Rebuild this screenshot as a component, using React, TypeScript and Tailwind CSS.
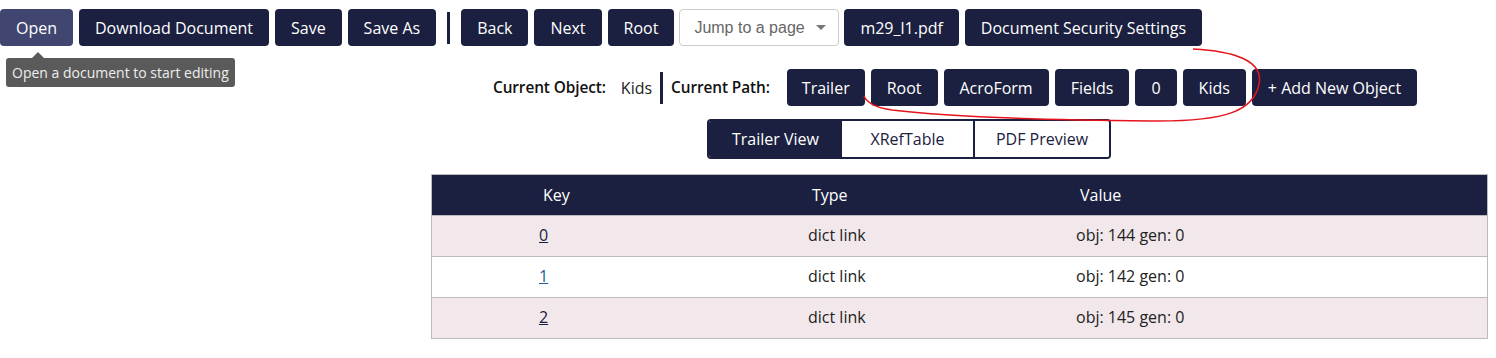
import React from "react";

const navyBtn =
  "h-[37px] px-4 flex items-center rounded-[4px] bg-[#1b2040] text-white text-[16px] whitespace-nowrap";

function Btn({ label, className = "" }: { label: string; className?: string }) {
  return <button className={`${navyBtn} ${className}`}>{label}</button>;
}

const rows = [
  { key: "0", value: "obj: 144 gen: 0", bg: "bg-[#f2e8eb]", link: "text-[#1b2040]" },
  { key: "1", value: "obj: 142 gen: 0", bg: "bg-white", link: "text-[#1a5f9e]" },
  { key: "2", value: "obj: 145 gen: 0", bg: "bg-[#f2e8eb]", link: "text-[#1b2040]" },
];

export default function App() {
  return (
    <div className="relative w-[1496px] h-[358px] bg-white font-['Open_Sans',sans-serif] text-[#222]">
      {/* toolbar */}
      <div className="flex items-center gap-[6px] pt-[9px]">
        <div className="relative">
          <button className="h-[37px] w-[73px] flex items-center justify-center rounded-[4px] bg-[#40466f] text-white text-[16px]">
            Open
          </button>
          <div className="absolute left-[6px] top-[49px] z-10">
            <div className="absolute left-[26px] -top-[6px] w-0 h-0 border-l-[6px] border-r-[6px] border-b-[6px] border-l-transparent border-r-transparent border-b-[#5a5a5a]" />
            <div className="w-[229px] h-[29px] flex items-center px-[6px] rounded-[3px] bg-[#5a5a5a] text-[#eee] text-[14px] whitespace-nowrap">
              Open a document to start editing
            </div>
          </div>
        </div>
        <Btn label="Download Document" />
        <Btn label="Save" />
        <Btn label="Save As" />
        <div className="w-[3px] h-[32px] bg-[#1b2040] mx-[5px]" />
        <Btn label="Back" />
        <Btn label="Next" />
        <Btn label="Root" />
        <div className="-ml-px h-[37px] w-[160px] flex items-center justify-between pl-[14px] pr-[12px] rounded-[4px] border border-[#ccc] bg-white text-[#666] text-[16px] font-['Liberation_Sans',sans-serif]">
          <span>Jump to a page</span>
          <svg width="10" height="6" viewBox="0 0 10 6">
            <path d="M0 0h10L5 5z" fill="#777" />
          </svg>
        </div>
        <Btn label="m29_l1.pdf" className="-ml-px" />
        <Btn label="Document Security Settings" />
      </div>

      <div className="flex">
        <div className="w-[431px] shrink-0" />
        <div className="w-[1057px]">
          {/* path row */}
          <div className="flex items-center pl-[62px] mt-[23px] text-[16px]">
            <span className="font-semibold text-[#111] text-[15.4px] tracking-[-0.1px]">Current Object:</span>
            <span className="ml-[15px]">Kids</span>
            <div className="w-[3px] h-[32px] bg-[#1b2040] ml-[8px] mr-[8px]" />
            <span className="font-semibold text-[#111] text-[15.4px] tracking-[-0.1px]">Current Path:</span>
            <div className="flex items-center gap-[6px] ml-[17px]">
              <Btn label="Trailer" className="px-[15px]" />
              <Btn label="Root" />
              <Btn label="AcroForm" />
              <Btn label="Fields" />
              <Btn label="0" />
              <Btn label="Kids" />
              <Btn label="+ Add New Object" />
            </div>
          </div>

          {/* tabs */}
          <div className="flex pl-[276px] mt-[13px]">
            <div className="flex h-[40px] rounded-[4px] border-2 border-[#1b2040] overflow-hidden text-[16px]">
              <div className="w-[133px] flex items-center justify-center bg-[#1b2040] text-white">Trailer View</div>
              <div className="w-[133px] flex items-center justify-center bg-white text-[#1b2040] border-r-2 border-[#1b2040]">
                XRefTable
              </div>
              <div className="w-[134px] flex items-center justify-center bg-white text-[#1b2040]">PDF Preview</div>
            </div>
          </div>

          {/* table */}
          <div className="mt-[15px] border border-[#bbb] text-[16px]">
            <div className="grid grid-cols-[269px_268px_1fr] h-[40px] items-center bg-[#1b2040] text-white pl-[111px]">
              <div>Key</div>
              <div>Type</div>
              <div>Value</div>
            </div>
            {rows.map((r) => (
              <div
                key={r.key}
                className={`grid grid-cols-[269px_268px_1fr] h-[41px] items-center border-t border-[#bbb] pl-[107px] pb-[2px] ${r.bg}`}
              >
                <div>
                  <a className={`underline ${r.link}`}>{r.key}</a>
                </div>
                <div>dict link</div>
                <div>{r.value}</div>
              </div>
            ))}
          </div>
        </div>
      </div>

      {/* red annotation */}
      <svg className="absolute left-0 top-0 pointer-events-none" width="1496" height="358">
        <path
          d="M1193 49 C1232 51, 1264 60, 1259 84 C1254 110, 1228 122, 1150 121 C1050 120, 950 117, 892 110 C872 107, 866 101, 864 96"
          fill="none"
          stroke="#e5141c"
          strokeWidth="1.5"
        />
      </svg>
    </div>
  );
}
